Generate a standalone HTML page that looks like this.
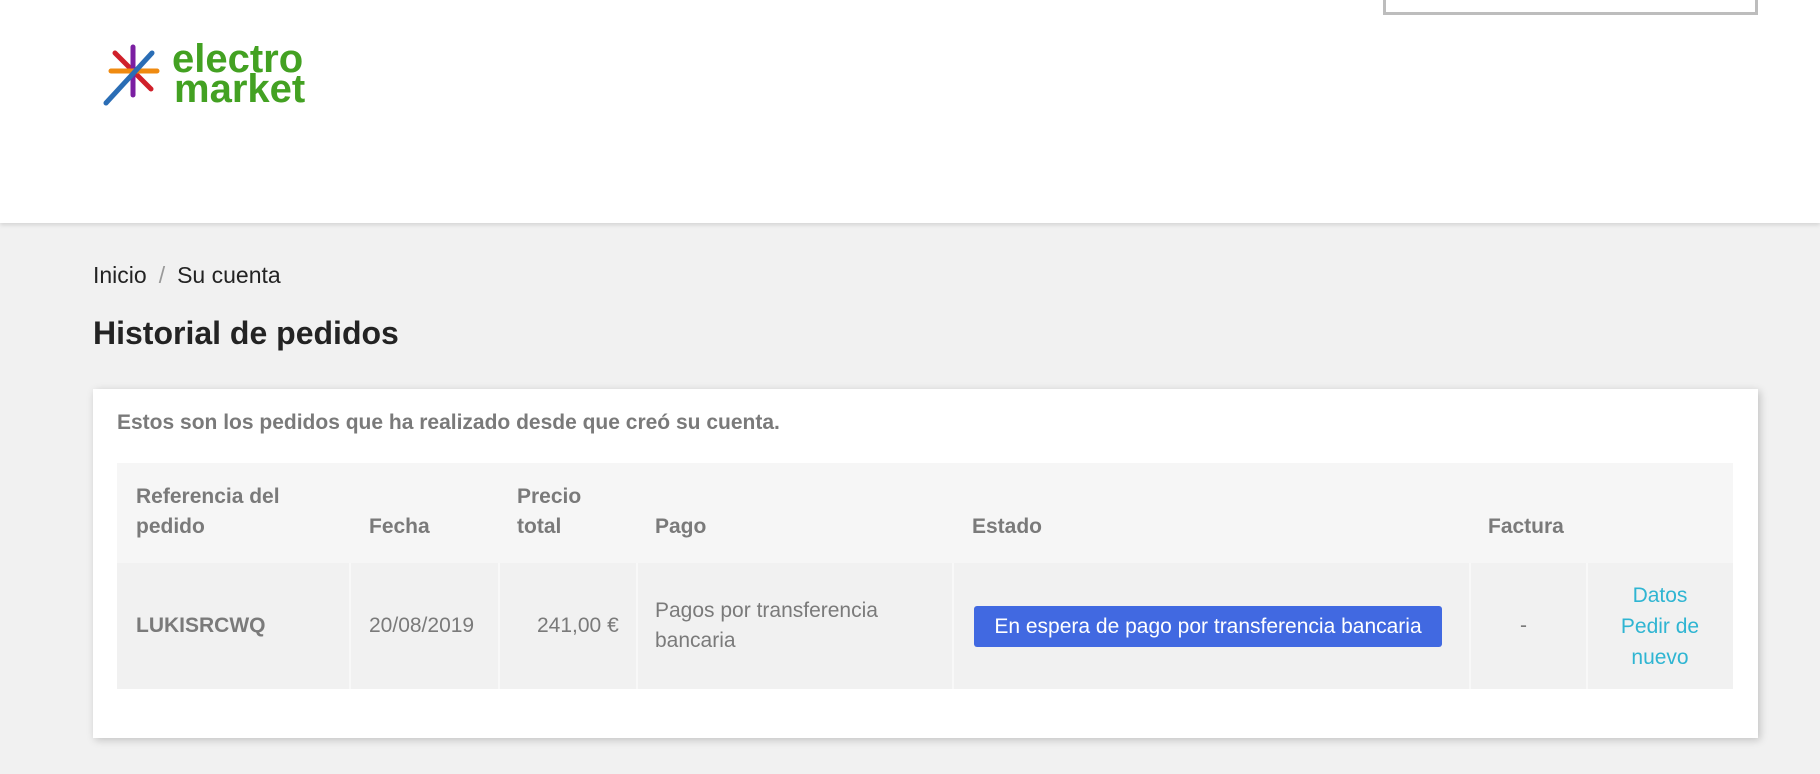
<!DOCTYPE html>
<html><head><meta charset="utf-8"><style>
*{box-sizing:border-box;margin:0;padding:0}
body{width:1820px;height:774px;overflow:hidden;background:#f1f1f1;font-family:"Liberation Sans",sans-serif;color:#7a7a7a;position:relative}
.hdr{position:absolute;left:0;top:0;width:1820px;height:223px;background:#fff;box-shadow:0 2px 4px rgba(0,0,0,.12)}
.search{position:absolute;left:1383px;top:-4px;width:375px;height:19px;border:3px solid #bdbdbd;border-top:none}
.bc{position:absolute;left:93px;top:262px;font-size:23px;color:#232323}
.bc span{color:#9a9a9a;margin:0 12px}
h1{position:absolute;left:93px;top:315px;font-size:32px;color:#232323;font-weight:bold}
.card{position:absolute;left:93px;top:389px;width:1665px;height:349px;background:#fff;box-shadow:2px 2px 8px rgba(0,0,0,.2)}
.intro{position:absolute;left:24px;top:22px;font-size:21px;font-weight:bold;color:#7a7a7a}
.tbl{position:absolute;left:24px;top:74px;width:1616px}
.th{height:100px;background:#f6f6f6;position:relative;font-weight:bold;font-size:21px}
.tr{height:126px;background:#f1f1f1;position:relative;font-size:21px}
.c{position:absolute;line-height:30px}
.sep{position:absolute;top:0;bottom:0;width:2px;background:#f8f8f8}
.badge{position:absolute;left:857px;top:43px;width:468px;height:41px;background:#4169e1;border-radius:3px;color:#fff;font-size:21px;line-height:41px;text-align:center}
.lnk{color:#2fb5d2;text-align:center}
</style></head><body>
<div class="hdr">
<div class="search"></div>
<svg style="position:absolute;left:100px;top:40px" width="240" height="70" viewBox="0 0 240 70">
<line x1="15" y1="13" x2="51" y2="49" stroke="#d0202a" stroke-width="5" stroke-linecap="round"/>
<line x1="33" y1="7" x2="33" y2="55" stroke="#7b1fa2" stroke-width="5" stroke-linecap="round"/>
<line x1="11" y1="31" x2="57" y2="31" stroke="#ef8a10" stroke-width="5" stroke-linecap="round"/>
<line x1="6" y1="63" x2="52" y2="13" stroke="#2a6db5" stroke-width="5" stroke-linecap="round"/>
<text x="72" y="32" font-family="Liberation Sans" font-weight="bold" font-size="40" fill="#43a122">electro</text>
<text x="74" y="62" font-family="Liberation Sans" font-weight="bold" font-size="40" fill="#43a122">market</text>
</svg>
</div>
<div class="bc">Inicio<span>/</span>Su cuenta</div>
<h1>Historial de pedidos</h1>
<div class="card">
<div class="intro">Estos son los pedidos que ha realizado desde que creó su cuenta.</div>
<div class="tbl">
<div class="th">
<div class="c" style="left:19px;top:19px">Referencia del<br>pedido</div>
<div class="c" style="left:252px;top:49px">Fecha</div>
<div class="c" style="left:400px;top:19px">Precio<br>total</div>
<div class="c" style="left:538px;top:49px">Pago</div>
<div class="c" style="left:855px;top:49px">Estado</div>
<div class="c" style="left:1371px;top:49px">Factura</div>
</div>
<div class="tr">
<div class="sep" style="left:232px"></div><div class="sep" style="left:381px"></div><div class="sep" style="left:519px"></div><div class="sep" style="left:835px"></div><div class="sep" style="left:1352px"></div><div class="sep" style="left:1469px"></div>
<div class="c" style="left:19px;top:48px;font-weight:bold">LUKISRCWQ</div>
<div class="c" style="left:252px;top:48px">20/08/2019</div>
<div class="c" style="left:420px;top:48px">241,00 €</div>
<div class="c" style="left:538px;top:33px">Pagos por transferencia<br>bancaria</div>
<div class="badge">En espera de pago por transferencia bancaria</div>
<div class="c" style="left:1403px;top:48px">-</div>
<div class="c lnk" style="left:1470px;width:146px;top:17px;line-height:31px">Datos<br>Pedir de<br>nuevo</div>
</div>
</div>
</div>
</body></html>
